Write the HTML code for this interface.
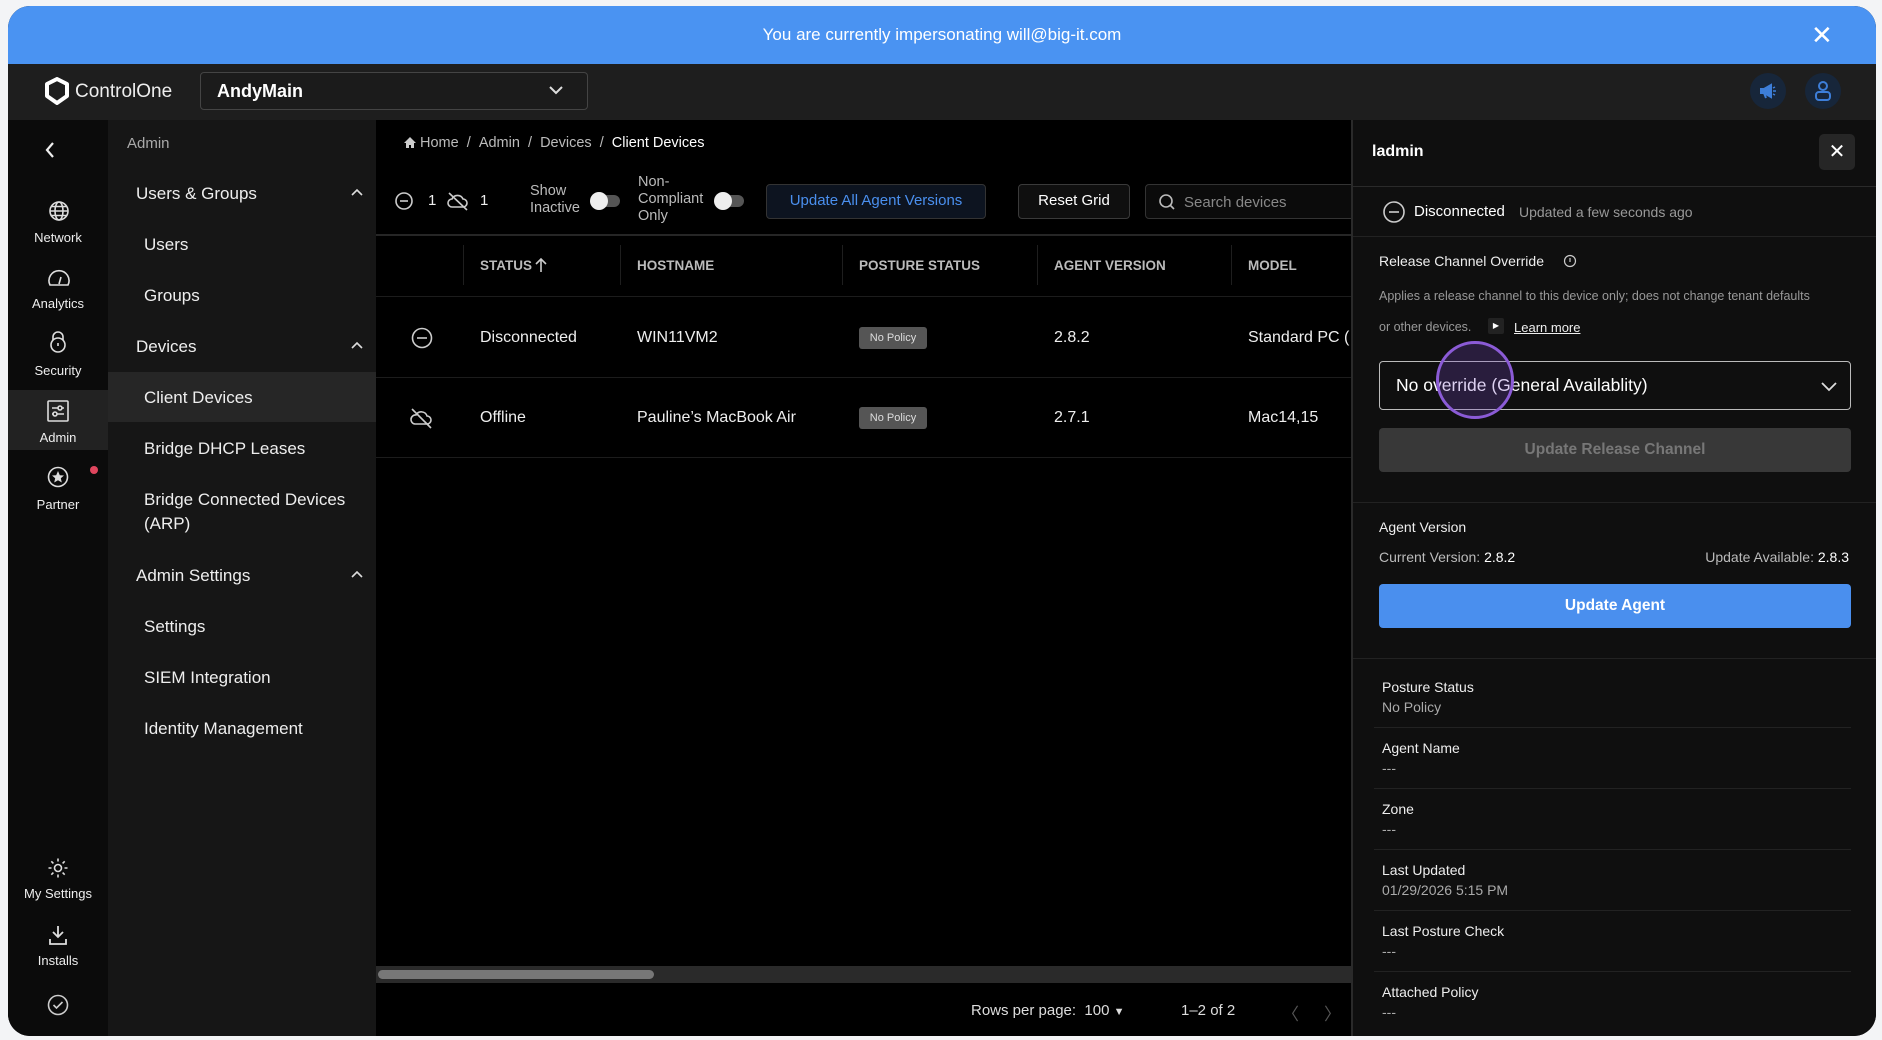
<!DOCTYPE html>
<html><head><meta charset="utf-8"><style>
*{box-sizing:border-box;margin:0;padding:0}
body{width:1882px;height:1040px;background:#f3f4f6;font-family:"Liberation Sans",Arial,sans-serif;overflow:hidden;position:relative}
.win{position:absolute;left:8px;top:6px;width:1868px;height:1030px;border-radius:22px;overflow:hidden;background:#000}
.a{position:absolute}
.w{position:absolute;left:-8px;top:-6px;width:calc(100% + 8px);height:calc(100% + 6px)}
.wr{position:absolute;left:0;top:-6px;width:100%;height:calc(100% + 6px)}
.banner{left:0;top:0;width:1868px;height:58px;background:#4a93f2;color:#fff;font-size:17px;text-align:center;line-height:58px}
.hdr{left:0;top:58px;width:1868px;height:56px;background:#1e1e1e}
.rail{left:0;top:114px;width:100px;height:916px;background:#0b0b0b;overflow:hidden}
.nav{left:100px;top:114px;width:268px;height:916px;background:#161616;overflow:hidden}
.main{left:368px;top:114px;width:975px;height:916px;background:#000;overflow:hidden}
.rp{left:1343px;top:114px;width:525px;height:916px;background:#0f0f0f;border-left:2px solid #2a2a2a;overflow:hidden}
.t{position:absolute;white-space:nowrap}
.ri{position:absolute;left:0;width:100px;text-align:center;color:#eee;font-size:13px}
.navh{color:#eee;font-size:17px}
.navi{color:#eee;font-size:17px}
.th{color:#bbb;font-size:13.5px;font-weight:bold;top:144px}
.sep{position:absolute;width:1px;height:40px;top:131px;background:#1e1e1e}
.row{color:#eee;font-size:16px}
.pill{position:absolute;background:#555;color:#ddd;font-size:11px;border-radius:3px;width:68px;height:22px;line-height:22px;text-align:center}
.lab{color:#eee;font-size:14px}
.val{color:#aaa;font-size:14px}
.ln{position:absolute;left:29px;width:477px;height:1px;background:#222}
</style></head><body>
<div class="win">
<div class="a banner">You are currently impersonating will@big-it.com</div>
<div class="t" style="left:1803px;top:14px;color:#fff;font-size:26px">✕</div>
<div class="a hdr">
 <svg class="a" style="left:36px;top:13px" width="26" height="28" viewBox="0 0 26 28"><path d="M13 2 L23 7 V19 L13 26 L3 19 V7 Z" fill="none" stroke="#fff" stroke-width="4" stroke-linejoin="round"/></svg>
 <div class="t" style="left:67px;top:17px;color:#eee;font-size:19px">ControlOne</div>
 <div class="a" style="left:192px;top:8px;width:388px;height:38px;border:1.5px solid #444;border-radius:4px;background:#1b1b1b"></div>
 <div class="t" style="left:209px;top:17px;color:#fff;font-size:18px;font-weight:bold">AndyMain</div>
 <svg class="a" style="left:540px;top:20px" width="16" height="12"><path d="M2 3 L8 9 L14 3" stroke="#ddd" stroke-width="2" fill="none"/></svg>
 <div class="a" style="left:1742px;top:9px;width:36px;height:36px;border-radius:50%;background:#17263a"></div>
 <svg class="a" style="left:1750px;top:17px" width="20" height="20" viewBox="0 0 20 20"><path d="M3 8 H6 L13 4 V16 L6 12 H3 Z M6 12 L8 17" stroke="#3d7ed8" stroke-width="2" fill="#3d7ed8"/><path d="M15 7 L17 6 M15 10 H18 M15 13 L17 14" stroke="#3d7ed8" stroke-width="1.5"/></svg>
 <div class="a" style="left:1797px;top:9px;width:36px;height:36px;border-radius:50%;background:#17263a"></div>
 <svg class="a" style="left:1805px;top:16px" width="20" height="22" viewBox="0 0 20 22"><circle cx="10" cy="6" r="4" stroke="#3d7ed8" stroke-width="2" fill="none"/><rect x="3" y="12" width="14" height="8" rx="3" stroke="#3d7ed8" stroke-width="2" fill="none"/></svg>
</div>
<div class="a rail"><div class="wr">
 <svg class="a" style="left:35px;top:26px" width="14" height="20"><path d="M10 3 L4 10 L10 17" stroke="#eee" stroke-width="2.2" fill="none"/></svg>
 <svg class="a" style="left:40px;top:86px" width="22" height="22" viewBox="0 0 22 22" fill="none" stroke="#ddd" stroke-width="1.6"><circle cx="11" cy="11" r="9"/><ellipse cx="11" cy="11" rx="4" ry="9"/><path d="M2 11H20M3.5 6.5H18.5M3.5 15.5H18.5"/></svg>
 <div class="ri" style="top:116px">Network</div>
 <svg class="a" style="left:39px;top:154px" width="24" height="20" viewBox="0 0 24 20" fill="none" stroke="#ddd" stroke-width="1.6"><path d="M3 17 A10 10 0 1 1 21 17 Z"/><path d="M12 16 L14 9"/></svg>
 <div class="ri" style="top:182px">Analytics</div>
 <svg class="a" style="left:40px;top:216px" width="20" height="24" viewBox="0 0 20 24" fill="none" stroke="#ddd" stroke-width="1.6"><path d="M5 10 V7 A5 5 0 0 1 15 7 V10"/><circle cx="10" cy="15" r="7"/><path d="M10 13V16"/></svg>
 <div class="ri" style="top:249px">Security</div>
 <div class="a" style="left:0;top:276px;width:100px;height:60px;background:#222"></div>
 <svg class="a" style="left:39px;top:286px" width="22" height="22" viewBox="0 0 22 22" fill="none" stroke="#ddd" stroke-width="1.6"><rect x="1" y="1" width="20" height="20" rx="1"/><path d="M5 8H17M5 14H17"/><circle cx="13" cy="8" r="2" fill="#222"/><circle cx="8" cy="14" r="2" fill="#222"/></svg>
 <div class="ri" style="top:316px">Admin</div>
 <svg class="a" style="left:39px;top:352px" width="22" height="22" viewBox="0 0 22 22"><circle cx="11" cy="11" r="9.5" stroke="#ddd" stroke-width="1.6" fill="none"/><path d="M11 5 L12.8 9.2 L17 9.5 L13.8 12.3 L14.8 16.5 L11 14.2 L7.2 16.5 L8.2 12.3 L5 9.5 L9.2 9.2 Z" fill="#ddd"/></svg>
 <div class="a" style="left:82px;top:352px;width:8px;height:8px;border-radius:50%;background:#e0465e"></div>
 <div class="ri" style="top:383px">Partner</div>
 <svg class="a" style="left:39px;top:743px" width="22" height="22" viewBox="0 0 22 22" fill="none" stroke="#ddd" stroke-width="1.6"><circle cx="11" cy="11" r="3.5"/><path d="M11 1.5V4.5M11 17.5V20.5M1.5 11H4.5M17.5 11H20.5M4.3 4.3L6.4 6.4M15.6 15.6L17.7 17.7M4.3 17.7L6.4 15.6M15.6 6.4L17.7 4.3"/></svg>
 <div class="ri" style="top:772px">My Settings</div>
 <svg class="a" style="left:40px;top:810px" width="20" height="22" viewBox="0 0 20 22" fill="none" stroke="#ddd" stroke-width="1.8"><path d="M10 2V13M5 8L10 13L15 8M2 15V20H18V15"/></svg>
 <div class="ri" style="top:839px">Installs</div>
 <svg class="a" style="left:39px;top:880px" width="22" height="22" viewBox="0 0 22 22" fill="none" stroke="#ccc" stroke-width="1.6"><circle cx="11" cy="11" r="9.5"/><path d="M6.5 11L9.5 14L15.5 8"/></svg>
</div></div>
<div class="a nav"><div class="w">
 <div class="t" style="left:27px;top:21px;color:#aaa;font-size:15px">Admin</div>
 <div class="t navh" style="left:36px;top:70px">Users &amp; Groups</div>
 <div class="t navi" style="left:44px;top:121px">Users</div>
 <div class="t navi" style="left:44px;top:172px">Groups</div>
 <div class="t navh" style="left:36px;top:223px">Devices</div>
 <div class="a" style="left:0;top:258px;width:100%;height:50px;background:#262626"></div>
 <div class="t navi" style="left:44px;top:274px">Client Devices</div>
 <div class="t navi" style="left:44px;top:325px">Bridge DHCP Leases</div>
 <div class="t navi" style="left:44px;top:376px">Bridge Connected Devices</div>
 <div class="t navi" style="left:44px;top:400px">(ARP)</div>
 <div class="t navh" style="left:36px;top:452px">Admin Settings</div>
 <div class="t navi" style="left:44px;top:503px">Settings</div>
 <div class="t navi" style="left:44px;top:554px">SIEM Integration</div>
 <div class="t navi" style="left:44px;top:605px">Identity Management</div>
 <svg class="a" style="left:250px;top:73px" width="14" height="10"><path d="M2 8L7 3L12 8" stroke="#ddd" stroke-width="1.6" fill="none"/></svg>
 <svg class="a" style="left:250px;top:226px" width="14" height="10"><path d="M2 8L7 3L12 8" stroke="#ddd" stroke-width="1.6" fill="none"/></svg>
 <svg class="a" style="left:250px;top:455px" width="14" height="10"><path d="M2 8L7 3L12 8" stroke="#ddd" stroke-width="1.6" fill="none"/></svg>
</div></div>
<div class="a main"><div class="w">
 <svg class="a" style="left:35px;top:22px" width="14" height="13" viewBox="0 0 14 13"><path d="M7 1L1 7H3V12H6V9H8V12H11V7H13Z" fill="#ccc"/></svg>
 <div class="t" style="left:52px;top:21px;color:#bbb;font-size:14.5px">Home &nbsp;/ &nbsp;Admin &nbsp;/ &nbsp;Devices &nbsp;/ &nbsp;<span style="color:#fff">Client Devices</span></div>
 <svg class="a" style="left:26px;top:77px" width="20" height="20" fill="none" stroke="#ccc" stroke-width="1.6"><circle cx="10" cy="10" r="8"/><path d="M6 10H14"/></svg>
 <div class="t" style="left:60px;top:78px;color:#eee;font-size:15px">1</div>
 <svg class="a" style="left:78px;top:76px" width="24" height="22" fill="none" stroke="#ccc" stroke-width="1.6"><path d="M6 17H17A4 4 0 0 0 17 9A6 6 0 0 0 6 9A4 4 0 0 0 6 17Z"/><path d="M3 3L21 20"/></svg>
 <div class="t" style="left:112px;top:78px;color:#eee;font-size:15px">1</div>
 <div class="t" style="left:162px;top:69px;color:#bbb;font-size:14.5px;line-height:17px">Show<br>Inactive</div>
 <div class="a" style="left:226px;top:81px;width:26px;height:12px;border-radius:6px;background:#555"></div>
 <div class="a" style="left:222px;top:78px;width:18px;height:18px;border-radius:50%;background:#eee"></div>
 <div class="t" style="left:270px;top:60px;color:#bbb;font-size:14.5px;line-height:17px">Non-<br>Compliant<br>Only</div>
 <div class="a" style="left:350px;top:81px;width:26px;height:12px;border-radius:6px;background:#555"></div>
 <div class="a" style="left:346px;top:78px;width:18px;height:18px;border-radius:50%;background:#eee"></div>
 <div class="a" style="left:398px;top:70px;width:220px;height:35px;border:1.5px solid #333;border-radius:4px;background:#0d1420;color:#4a8fee;font-size:15px;text-align:center;line-height:32px">Update All Agent Versions</div>
 <div class="a" style="left:650px;top:70px;width:112px;height:35px;border:1.5px solid #3a3a3a;border-radius:4px;background:#0f0f0f;color:#fff;font-size:15px;text-align:center;line-height:32px">Reset Grid</div>
 <div class="a" style="left:777px;top:70px;width:220px;height:35px;border:1.5px solid #333;border-radius:4px;background:#0b0b0b"></div>
 <svg class="a" style="left:790px;top:79px" width="18" height="18" fill="none" stroke="#bbb" stroke-width="1.6"><circle cx="8" cy="8" r="6"/><path d="M12.5 12.5L16 16"/></svg>
 <div class="t" style="left:816px;top:80px;color:#888;font-size:15px">Search devices</div>
 <div class="a" style="left:0;top:120px;width:100%;height:2px;background:#262626"></div>
 <div class="sep" style="left:95px"></div><div class="sep" style="left:252px"></div><div class="sep" style="left:474px"></div><div class="sep" style="left:669px"></div><div class="sep" style="left:863px"></div>
 <div class="t th" style="left:112px">STATUS</div>
 <svg class="a" style="left:166px;top:143px" width="14" height="16"><path d="M7 15V2M2 7L7 2L12 7" stroke="#ccc" stroke-width="1.6" fill="none"/></svg>
 <div class="t th" style="left:269px">HOSTNAME</div>
 <div class="t th" style="left:491px">POSTURE STATUS</div>
 <div class="t th" style="left:686px">AGENT VERSION</div>
 <div class="t th" style="left:880px">MODEL</div>
 <div class="a" style="left:0;top:182px;width:100%;height:1px;background:#1c1c1c"></div>
 <svg class="a" style="left:43px;top:213px" width="22" height="22" fill="none" stroke="#ccc" stroke-width="1.6"><circle cx="11" cy="11" r="9.5"/><path d="M6 11H16"/></svg>
 <div class="t row" style="left:112px;top:215px">Disconnected</div>
 <div class="t row" style="left:269px;top:215px">WIN11VM2</div>
 <div class="pill" style="left:491px;top:213px">No Policy</div>
 <div class="t row" style="left:686px;top:215px">2.8.2</div>
 <div class="t row" style="left:880px;top:215px">Standard PC (</div>
 <div class="a" style="left:0;top:263px;width:100%;height:1px;background:#1c1c1c"></div>
 <svg class="a" style="left:41px;top:292px" width="26" height="24" fill="none" stroke="#ccc" stroke-width="1.6"><path d="M6 18H18A4 4 0 0 0 18 10A6 6 0 0 0 7 9A4.5 4.5 0 0 0 6 18Z"/><path d="M3 3L22 22"/></svg>
 <div class="t row" style="left:112px;top:295px">Offline</div>
 <div class="t row" style="left:269px;top:295px">Pauline’s MacBook Air</div>
 <div class="pill" style="left:491px;top:293px">No Policy</div>
 <div class="t row" style="left:686px;top:295px">2.7.1</div>
 <div class="t row" style="left:880px;top:295px">Mac14,15</div>
 <div class="a" style="left:0;top:343px;width:100%;height:1px;background:#1c1c1c"></div>
 <div class="a" style="left:8px;top:852px;width:975px;height:17px;background:#2a2a2a"></div>
 <div class="a" style="left:10px;top:856px;width:276px;height:9px;border-radius:5px;background:#777"></div>
 <div class="t" style="left:603px;top:888px;color:#ddd;font-size:15px">Rows per page: &nbsp;100 <span style="font-size:11px">▼</span></div>
 <div class="t" style="left:813px;top:888px;color:#ddd;font-size:15px">1–2 of 2</div>
 <div class="t" style="left:914px;top:886px;color:#555;font-size:17px">〈</div>
 <div class="t" style="left:956px;top:886px;color:#555;font-size:17px">〉</div>
</div></div>
<div class="a rp"><div class="w">
 <div class="t" style="left:27px;top:29px;color:#fff;font-size:16px;font-weight:bold">ladmin</div>
 <div class="a" style="left:474px;top:20px;width:36px;height:36px;border-radius:5px;background:#262626;color:#fff;font-size:20px;text-align:center;line-height:36px">✕</div>
 <div class="a" style="left:0;top:72px;width:100%;height:1px;background:#2a2a2a"></div>
 <svg class="a" style="left:37px;top:86px" width="24" height="24" fill="none" stroke="#ccc" stroke-width="1.6"><circle cx="12" cy="12" r="10"/><path d="M7 12H17"/></svg>
 <div class="t" style="left:69px;top:89px;color:#fff;font-size:15px">Disconnected</div>
 <div class="t" style="left:174px;top:90px;color:#999;font-size:14px">Updated a few seconds ago</div>
 <div class="a" style="left:0;top:122px;width:100%;height:1px;background:#222"></div>
 <div class="t" style="left:34px;top:139px;color:#eee;font-size:14px">Release Channel Override</div>
 <svg class="a" style="left:218px;top:140px" width="14" height="14" fill="none" stroke="#ccc" stroke-width="1.2"><circle cx="7" cy="7" r="5.5"/><path d="M7 4V8"/></svg>
 <div class="t" style="left:34px;top:175px;color:#999;font-size:12.5px">Applies a release channel to this device only; does not change tenant defaults</div>
 <div class="t" style="left:34px;top:206px;color:#999;font-size:12.5px">or other devices.</div>
 <div class="a" style="left:143px;top:204px;width:16px;height:16px;background:#222;border-radius:2px;color:#fff;font-size:8px;text-align:center;line-height:16px">▶</div>
 <div class="t" style="left:169px;top:206px;color:#eee;font-size:13px;text-decoration:underline">Learn more</div>
 <div class="a" style="left:34px;top:247px;width:472px;height:49px;border:1.5px solid #bbb;border-radius:4px"></div>
 <div class="t" style="left:51px;top:261px;color:#fff;font-size:17.5px">No override (General Availablity)</div>
 <svg class="a" style="left:475px;top:266px" width="18" height="12"><path d="M2 3L9 10L16 3" stroke="#ddd" stroke-width="1.8" fill="none"/></svg>
 <div class="a" style="left:91px;top:227px;width:78px;height:78px;border-radius:50%;border:3px solid #8b5bd6;background:rgba(120,70,200,0.25)"></div>
 <div class="a" style="left:34px;top:314px;width:472px;height:44px;border-radius:4px;background:#383838;color:#777;font-size:15.5px;font-weight:bold;text-align:center;line-height:44px">Update Release Channel</div>
 <div class="a" style="left:0;top:388px;width:100%;height:1px;background:#222"></div>
 <div class="t" style="left:34px;top:405px;color:#eee;font-size:14px">Agent Version</div>
 <div class="t" style="left:34px;top:435px;color:#bbb;font-size:14px">Current Version: <span style="color:#fff">2.8.2</span></div>
 <div class="t" style="right:27px;top:435px;color:#bbb;font-size:14px">Update Available: <span style="color:#fff">2.8.3</span></div>
 <div class="a" style="left:34px;top:470px;width:472px;height:44px;border-radius:4px;background:#4a8fee;color:#fff;font-size:15.5px;font-weight:bold;text-align:center;line-height:44px">Update Agent</div>
 <div class="a" style="left:0;top:544px;width:100%;height:1px;background:#222"></div>
 <div class="t lab" style="left:37px;top:565px">Posture Status</div><div class="t val" style="left:37px;top:585px">No Policy</div><div class="ln" style="top:613px"></div>
 <div class="t lab" style="left:37px;top:626px">Agent Name</div><div class="t val" style="left:37px;top:646px">---</div><div class="ln" style="top:674px"></div>
 <div class="t lab" style="left:37px;top:687px">Zone</div><div class="t val" style="left:37px;top:707px">---</div><div class="ln" style="top:735px"></div>
 <div class="t lab" style="left:37px;top:748px">Last Updated</div><div class="t val" style="left:37px;top:768px">01/29/2026 5:15 PM</div><div class="ln" style="top:796px"></div>
 <div class="t lab" style="left:37px;top:809px">Last Posture Check</div><div class="t val" style="left:37px;top:829px">---</div><div class="ln" style="top:857px"></div>
 <div class="t lab" style="left:37px;top:870px">Attached Policy</div><div class="t val" style="left:37px;top:890px">---</div>
</div></div>
</div>
</body></html>
